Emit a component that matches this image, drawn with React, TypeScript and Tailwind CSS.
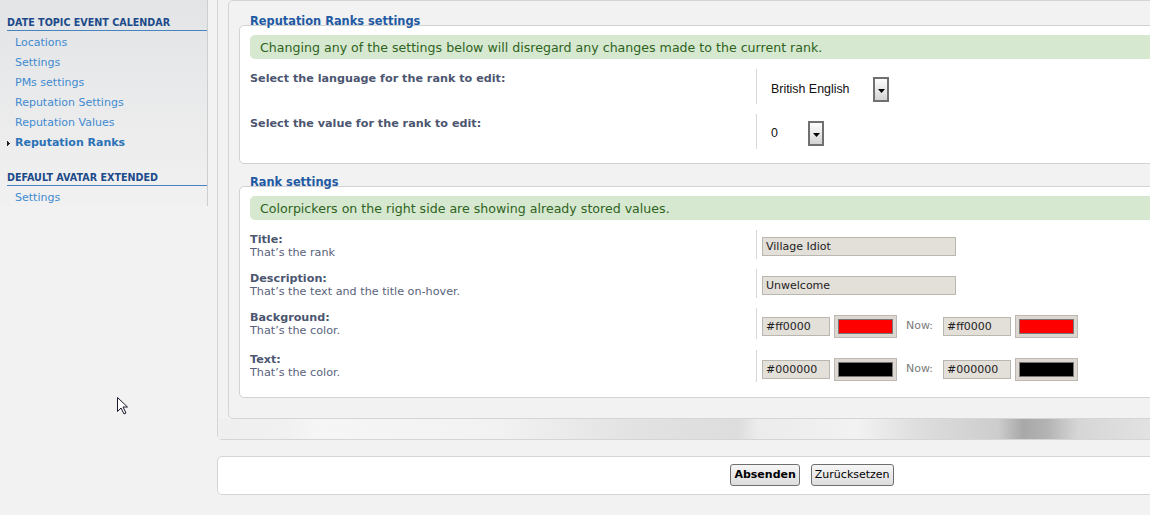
import React from "react";

const menu = [
  {
    title: "DATE TOPIC EVENT CALENDAR",
    links: ["Locations", "Settings", "PMs settings", "Reputation Settings", "Reputation Values", "Reputation Ranks"],
    active: "Reputation Ranks",
  },
  { title: "DEFAULT AVATAR EXTENDED", links: ["Settings"], active: "" },
];

const DropArrow = () => (
  <span className="flex h-[25px] w-[16px] items-center justify-center border-2 border-[#707070] bg-[linear-gradient(#fdfdfd,#d3d3d3)]">
    <svg width="7" height="4" viewBox="0 0 7 4" className="mt-[2px]">
      <path d="M0 0h7L3.5 4z" fill="#000" />
    </svg>
  </span>
);

const TextBox = ({ value, w }: { value: string; w: string }) => (
  <div className={`${w} h-[19px] border border-[#bab6b0] bg-[#e3dfd9] pl-[3px] text-[11px] leading-[17px] text-[#1d1d1d]`}>
    {value}
  </div>
);

const Swatch = ({ color }: { color: string }) => (
  <div className="h-[23px] w-[63px] border border-[#bdb9b2] bg-[#dcd8d1] p-[3px]">
    <div className={`h-full w-full border border-[#777] ${color}`}></div>
  </div>
);

const ColorRow = ({ hex, color }: { hex: string; color: string }) => (
  <div className="flex items-center">
    <TextBox value={hex} w="w-[68px]" />
    <div className="ml-[4px]">
      <Swatch color={color} />
    </div>
    <span className="ml-[9px] w-[37px] text-[11px] text-[#7b7b7b]">Now:</span>
    <TextBox value={hex} w="w-[68px]" />
    <div className="ml-[4px]">
      <Swatch color={color} />
    </div>
  </div>
);

const Legend = ({ text, mt }: { text: string; mt: string }) => (
  <div className={`${mt} relative z-10 h-[15px] pl-[11px] text-[11.4px] font-bold leading-[20px] text-[#1f5aa3]`}>{text}</div>
);

const Notice = ({ text }: { text: string }) => (
  <div className="h-[24px] rounded-l-[5px] bg-[#d6e8cf] pl-[10px] text-[12.6px] leading-[25px] text-[#2e6322]">{text}</div>
);

const Label = ({ title, desc }: { title: string; desc?: string }) => (
  <div className="w-[506px] flex-none pt-[3px] text-[11.2px] leading-[13px]">
    <div className="font-bold text-[#4c5670]">{title}</div>
    {desc && <div className="text-[#59627c]">{desc}</div>}
  </div>
);

export default function App() {
  return (
    <div className="relative flex h-[515px] w-[1150px] overflow-hidden bg-[#f2f2f2] font-['DejaVu_Sans',sans-serif]">
      {/* sidebar */}
      <div className="h-[206px] w-[208px] flex-none border-r border-[#cdcecf] bg-[linear-gradient(#e3e4e6,#f1f1f1)] pt-[16px]">
        {menu.map((sec, i) => (
          <div key={sec.title} className={i > 0 ? "mt-[18px]" : ""}>
            <div className="ml-[7px] h-[15px] border-b border-[#4a84c0] text-[9.6px] font-bold leading-[14px] text-[#1c4a8a]">
              {sec.title}
            </div>
            <div className="pt-[2px]">
              {sec.links.map((l) => (
                <div key={l} className="relative h-[20px] pl-[15px] text-[11px] leading-[20px]">
                  {l === sec.active ? (
                    <>
                      <svg className="absolute left-[7px] top-[8px]" width="3" height="5" viewBox="0 0 3 5">
                        <path d="M0 0h1v1h1v1h1v1h-1v1h-1v1h-1z" fill="#222" />
                      </svg>
                      <span className="font-bold text-[#2b72b6]">{l}</span>
                    </>
                  ) : (
                    <span className="text-[#3f8ad0]">{l}</span>
                  )}
                </div>
              ))}
            </div>
          </div>
        ))}
      </div>

      {/* main */}
      <div className="ml-[9px] w-[1190px] flex-none">
        <div className="-mt-[8px] rounded-[5px] border border-[#d5d5d5] bg-[#f2f2f2]">
          <div className="pl-[10px] pt-[7px]">
            <div className="rounded-[5px] border border-[#d5d5d5] bg-[#f2f2f2] pb-[20px] pl-[10px]">
              <Legend text="Reputation Ranks settings" mt="mt-[10px]" />
              <div className="-mt-[1px] rounded-[5px] border border-[#d2d2d2] bg-white pb-[14px] pl-[10px] pt-[9px]">
                <Notice text="Changing any of the settings below will disregard any changes made to the current rank." />
                <div className="mt-[10px] flex h-[35px]">
                  <Label title="Select the language for the rank to edit:" />
                  <div className="flex h-full items-start border-l border-[#d8d8d8] pl-[14px] pt-[8px]">
                    <span className="w-[102px] font-['Liberation_Sans',sans-serif] text-[12.4px] leading-[25px] text-[#111]">British English</span>
                    <DropArrow />
                  </div>
                </div>
                <div className="mt-[10px] flex h-[35px]">
                  <Label title="Select the value for the rank to edit:" />
                  <div className="flex h-full items-start border-l border-[#d8d8d8] pl-[14px] pt-[7px]">
                    <span className="w-[37px] font-['Liberation_Sans',sans-serif] text-[12.4px] leading-[25px] text-[#111]">0</span>
                    <DropArrow />
                  </div>
                </div>
              </div>

              <Legend text="Rank settings" mt="mt-[8px]" />
              <div className="-mt-[1px] rounded-[5px] border border-[#d2d2d2] bg-white pb-[15px] pl-[10px] pt-[9px]">
                <Notice text="Colorpickers on the right side are showing already stored values." />
                <div className="mt-[10px] flex h-[29px]">
                  <Label title="Title:" desc="That’s the rank" />
                  <div className="h-full border-l border-[#d8d8d8] pl-[5px] pt-[7px]">
                    <TextBox value="Village Idiot" w="w-[194px]" />
                  </div>
                </div>
                <div className="mt-[10px] flex h-[29px]">
                  <Label title="Description:" desc="That’s the text and the title on-hover." />
                  <div className="h-full border-l border-[#d8d8d8] pl-[5px] pt-[7px]">
                    <TextBox value="Unwelcome" w="w-[194px]" />
                  </div>
                </div>
                <div className="mt-[10px] flex h-[31px]">
                  <Label title="Background:" desc="That’s the color." />
                  <div className="h-full border-l border-[#d8d8d8] pl-[5px] pt-[7px]">
                    <ColorRow hex="#ff0000" color="bg-[#ff0000]" />
                  </div>
                </div>
                <div className="mt-[11px] flex h-[32px]">
                  <Label title="Text:" desc="That’s the color." />
                  <div className="h-full border-l border-[#d8d8d8] pl-[5px] pt-[8px]">
                    <ColorRow hex="#000000" color="bg-black" />
                  </div>
                </div>
              </div>
            </div>
          </div>
          <div className="h-[20px] bg-[linear-gradient(90deg,#efefef_0px,#f1f1f1_70px,#f6f6f6_100px,#f2f2f2_280px,#e2e2e2_420px,#dddddd_520px,#ececec_540px,#f2f2f2_640px,#dedede_700px,#cdcdcd_780px,#a8a8a8_805px,#b4b4b4_830px,#d6d6d6_860px,#e2e2e2_932px,#f0f0f0_1190px)]"></div>
        </div>

        <div className="mt-[16px] flex h-[39px] justify-center gap-[11px] rounded-[5px] border border-[#d5d5d5] bg-white pt-[7px]">
          <button className="h-[22px] rounded-[3px] border border-[#6f6f6f] bg-[linear-gradient(#f6f6f6,#dddddd)] px-[3px] text-[11px] font-bold text-black">
            Absenden
          </button>
          <button className="h-[22px] rounded-[3px] border border-[#6f6f6f] bg-[linear-gradient(#f6f6f6,#dddddd)] px-[3px] text-[11px] text-black">
            Zurücksetzen
          </button>
        </div>
      </div>

      {/* mouse pointer */}
      <svg className="absolute left-[116px] top-[396px]" width="13" height="20" viewBox="0 0 13 20">
        <path d="M1.5 1.5v14l3.5-3.5 3 6 2-1-3-6h4.5z" fill="#fff" stroke="#1a1a2a" strokeWidth="1" strokeLinejoin="miter" />
      </svg>
    </div>
  );
}
